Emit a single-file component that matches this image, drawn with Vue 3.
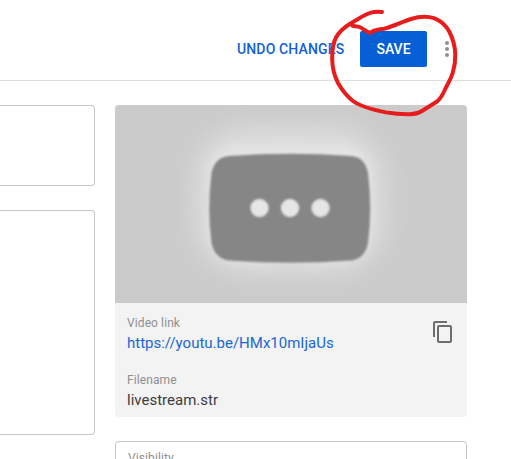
<script setup>
const dots = [0, 1, 2]
const videoLink = 'https://youtu.be/HMx10mIjaUs'
const filename = 'livestream.str'
</script>

<template>
  <div class="page">
    <header class="toolbar">
      <button class="undo">UNDO CHANGES</button>
      <button class="save">SAVE</button>
      <button class="menu" aria-label="Options">
        <i v-for="d in dots" :key="d"></i>
      </button>
    </header>

    <main class="content">
      <section class="fields">
        <div class="field title-field"></div>
        <div class="field description-field"></div>
      </section>

      <aside class="sidebar">
        <div class="video-card">
          <svg class="thumb" viewBox="0 0 352 198" aria-hidden="true">
            <defs>
              <filter id="glow" x="-50%" y="-60%" width="200%" height="220%">
                <feGaussianBlur stdDeviation="15" />
              </filter>
              <filter id="halo" x="-20%" y="-30%" width="140%" height="160%">
                <feGaussianBlur stdDeviation="6" />
              </filter>
              <filter id="soft"><feGaussianBlur stdDeviation="0.9" /></filter>
            </defs>
            <rect width="352" height="198" fill="#cbcbcb" />
            <rect x="82" y="24" width="186" height="142" rx="50" fill="#e4e4e4" opacity=".85" filter="url(#glow)" />
            <rect x="94" y="42" width="162" height="114" rx="26" fill="#e9e9e9" opacity=".6" filter="url(#halo)" />
            <g filter="url(#soft)">
              <path d="M114 51 Q175 46.500 236 51 Q250 52 253 68 Q257.500 104 253 138 Q250 154 236 155.500 Q175 160 114 155.500 Q100 154 96.500 138 Q92 104 96.500 68 Q100 52 114 51Z" fill="#868686" />
              <g fill="#e6e6e6">
                <circle cx="144.500" cy="103" r="9" />
                <circle cx="175" cy="103" r="9" />
                <circle cx="205.500" cy="103" r="9" />
              </g>
            </g>
          </svg>
          <div class="details">
            <div class="texts">
              <div class="label">Video link</div>
              <a class="value link">{{ videoLink }}</a>
              <div class="label file-label">Filename</div>
              <div class="value">{{ filename }}</div>
            </div>
            <svg class="copy" viewBox="0 0 24 24" aria-hidden="true">
              <path d="M16 1H4c-1.100 0-2 .9-2 2v14h2V3h12V1zm3 4H8c-1.100 0-2 .9-2 2v14c0 1.100.9 2 2 2h11c1.100 0 2-.9 2-2V7c0-1.100-.9-2-2-2zm0 16H8V7h11v14z" />
            </svg>
          </div>
        </div>
        <div class="visibility">Visibility</div>
      </aside>
    </main>

    <svg class="annotation" viewBox="0 0 511 130" aria-hidden="true">
      <path d="M382 12 C377 11.700 374 11.800 371 12.600 C364 14.500 357 20 350.500 23.500 C344 27.500 339 32 336 37.500 C332.500 44 332 51 332.200 59 C332.200 68 334 75 338 83 C342 90 346 95.500 353 101 C361 107 374 110 386 112.400 C394 113.800 402 114.300 410 114.200 C415 114.200 418 113.500 422 111 L437 101.500 C441 98.500 443 94 445 89.500 C448 83 451 79 452.700 73 C454.500 67 455.500 61 455.300 54 C455 46 453 39 449.500 32 C446 25.500 440 20.500 434 18.200 C427 16 420 16.200 411 19 C402 21.800 393 26.500 384 28.700 C379 29.800 374.500 29.300 370.300 33 C365.500 31.500 363 28.500 359.500 27 C357 26 355 26.300 352.500 25.800" />
    </svg>
  </div>
</template>

<style>
body {
  margin: 0;
  overflow: hidden;
  background: #fff;
}
</style>

<style scoped>
.page {
  position: relative;
  box-sizing: border-box;
  height: 459px;
  overflow: hidden;
  font-family: Roboto, "Liberation Sans", sans-serif;
  background: #fff;
}
.toolbar {
  display: flex;
  align-items: center;
  justify-content: flex-end;
  box-sizing: border-box;
  height: 81px;
  padding: 18px 54px 0 0;
  border-bottom: 1px solid #dedede;
}
button {
  padding: 0;
  border: 0;
  background: none;
  font: 500 14px/36px Roboto, "Liberation Sans", sans-serif;
  white-space: nowrap;
}
.undo {
  width: 108px;
  margin-right: 15px;
  color: #1260d4;
  letter-spacing: 0.14px;
  text-align: left;
}
.save {
  width: 67px;
  height: 36px;
  border-radius: 2px;
  background: #065fd4;
  color: #fff;
}
.menu {
  display: flex;
  flex-direction: column;
  align-items: center;
  gap: 2px;
  width: 10px;
  margin-left: 15px;
  margin-right: 5px;
}
.menu i {
  width: 4px;
  height: 4px;
  border-radius: 50%;
  background: #909090;
}
.content {
  display: flex;
  gap: 20px;
  padding-top: 24px;
}
.fields {
  display: flex;
  flex-direction: column;
  gap: 24px;
  width: 95px;
}
.field {
  box-sizing: border-box;
  border: 1px solid #c6c6c6;
  border-left: 0;
  border-radius: 0 4px 4px 0;
}
.title-field {
  height: 81px;
}
.description-field {
  height: 225px;
}
.sidebar {
  width: 352px;
}
.video-card {
  overflow: hidden;
  height: 312px;
  border-radius: 4px;
  background: #f3f3f3;
}
.thumb {
  display: block;
  width: 352px;
  height: 198px;
}
.details {
  display: flex;
  justify-content: space-between;
  padding: 12px 12px 0;
}
.label {
  color: #909090;
  font-size: 12px;
  line-height: 16px;
  letter-spacing: 0.1px;
}
.value {
  display: block;
  color: #3c3c3c;
  font-size: 15px;
  line-height: 24px;
}
.link {
  color: #1967d2;
}
.file-label {
  margin-top: 17px;
}
.copy {
  width: 24px;
  height: 24px;
  margin-top: 5px;
  fill: #6d6d6d;
}
.visibility {
  box-sizing: border-box;
  height: 60px;
  margin-top: 24px;
  padding: 8px 12px;
  border: 1px solid #c6c6c6;
  border-radius: 4px;
  color: #909090;
  font-size: 12px;
  line-height: 16px;
  letter-spacing: 0.1px;
}
.annotation {
  position: absolute;
  top: 0;
  left: 0;
  width: 511px;
  height: 130px;
  pointer-events: none;
}
.annotation path {
  fill: none;
  stroke: #e71d1d;
  stroke-width: 4;
  stroke-linecap: round;
  stroke-linejoin: round;
}
</style>
